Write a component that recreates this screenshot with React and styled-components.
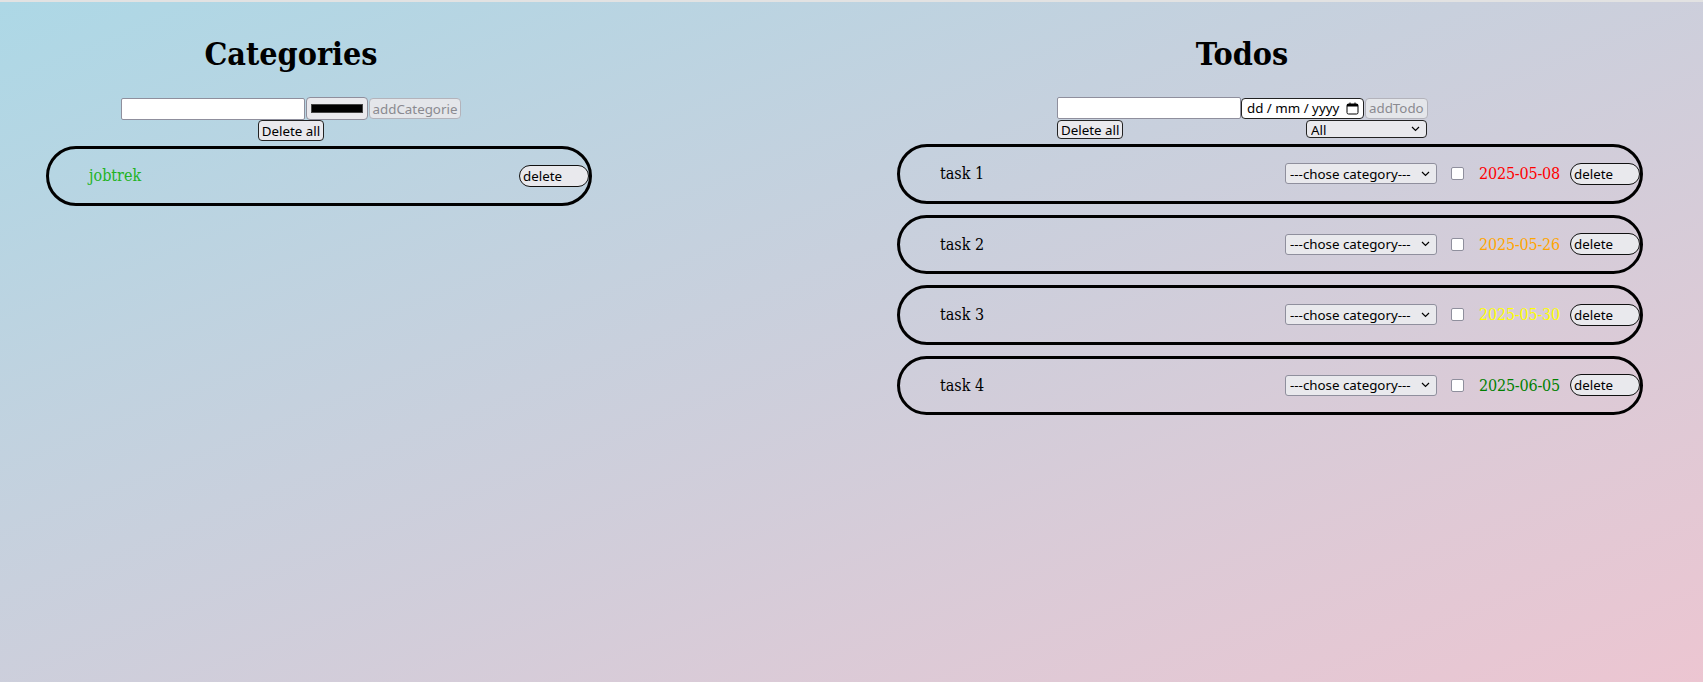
import { useState } from 'react';
import styled, { createGlobalStyle } from 'styled-components';

const GlobalStyle = createGlobalStyle`
  html, body {
    margin: 0;
    padding: 0;
  }
  body {
    font-family: "DejaVu Serif Condensed", "DejaVu Serif", serif;
    font-stretch: condensed;
  }
`;

const categories = [{ id: 1, name: 'jobtrek', color: '#22b322' }];

const todos = [
  { id: 1, title: 'task 1', date: '2025-05-08', color: '#ff0000' },
  { id: 2, title: 'task 2', date: '2025-05-26', color: '#ffa500' },
  { id: 3, title: 'task 3', date: '2025-05-30', color: '#ffff00' },
  { id: 4, title: 'task 4', date: '2025-06-05', color: '#008000' },
];

const Chevron = () => (
  <ChevronIcon width='9' height='6' viewBox='0 0 9 6'>
    <path d='M1 1l3.5 3.5L8 1' fill='none' stroke='#000' strokeWidth='1.2' />
  </ChevronIcon>
);

const CalendarIcon = () => (
  <svg width='13' height='13' viewBox='0 0 13 13'>
    <rect x='1' y='2' width='11' height='10' rx='1.5' fill='none' stroke='#000' strokeWidth='1' />
    <rect x='1' y='2' width='11' height='2.5' fill='#000' />
    <rect x='3.5' y='0.5' width='1' height='2' fill='#000' />
    <rect x='8.5' y='0.5' width='1' height='2' fill='#000' />
  </svg>
);

export default function App() {
  const [catName, setCatName] = useState('');
  const [todoName, setTodoName] = useState('');
  const [todoDate, setTodoDate] = useState('');

  return (
    <>
      <GlobalStyle />
      <Page>
        <Section $width='566px'>
          <Title>Categories</Title>
          <CategoryForm>
            <InputRow>
              <TextInput value={catName} onChange={(e) => setCatName(e.target.value)} />
              <ColorInput type='color' defaultValue='#000000' />
              <AddButton disabled>addCategorie</AddButton>
            </InputRow>
            <SmallButton $h='21px'>Delete all</SmallButton>
          </CategoryForm>
          <List>
            {categories.map((cat) => (
              <Item key={cat.id}>
                <ItemLabel $color={cat.color}>{cat.name}</ItemLabel>
                <DeleteButton>delete</DeleteButton>
              </Item>
            ))}
          </List>
        </Section>

        <Section $width='766px'>
          <Title>Todos</Title>
          <TodoForm>
            <InputRow>
              <TextInput value={todoName} onChange={(e) => setTodoName(e.target.value)} />
              <DateField>
                <DateText
                  placeholder='dd / mm / yyyy'
                  value={todoDate}
                  onChange={(e) => setTodoDate(e.target.value)}
                />
                <CalendarIcon />
              </DateField>
              <AddButton disabled>addTodo</AddButton>
            </InputRow>
            <SpreadRow>
              <SmallButton $h='19px'>Delete all</SmallButton>
              <SelectWrap>
                <FilterSelect defaultValue='all'>
                  <option value='all'>All</option>
                  <option value='done'>Done</option>
                  <option value='todo'>Todo</option>
                </FilterSelect>
                <Chevron />
              </SelectWrap>
            </SpreadRow>
          </TodoForm>
          <List>
            {todos.map((todo) => (
              <Item key={todo.id}>
                <ItemLabel>{todo.title}</ItemLabel>
                <Actions>
                  <SelectWrap>
                    <CategorySelect defaultValue=''>
                      <option value=''>---chose category---</option>
                      <option value='1'>jobtrek</option>
                    </CategorySelect>
                    <Chevron />
                  </SelectWrap>
                  <Check type='checkbox' />
                  <DueDate $color={todo.color}>{todo.date}</DueDate>
                  <DeleteButton>delete</DeleteButton>
                </Actions>
              </Item>
            ))}
          </List>
        </Section>
      </Page>
    </>
  );
}

const controlFont = `
  font-family: "Noto Sans", "DejaVu Sans", sans-serif;
  font-size: 13.33px;
  font-stretch: normal;
`;

const Page = styled.div`
  min-height: 100vh;
  box-sizing: border-box;
  border-top: 2px solid #e2e2e2;
  padding: 6px 8px 8px;
  background: linear-gradient(to bottom right, lightblue 0%, pink 130%);
  display: grid;
  grid-template-columns: 566px 766px;
  column-gap: 285px;
  align-items: start;
`;

const Section = styled.section`
  width: ${(p) => p.$width};
  display: flex;
  flex-direction: column;
  align-items: center;
`;

const Title = styled.h1`
  font-size: 32px;
  line-height: 44px;
  font-weight: 700;
  margin: 24px 0 21px;
`;

const CategoryForm = styled.div`
  display: flex;
  flex-direction: column;
  align-items: center;
`;

const TodoForm = styled.div`
  width: 370px;
  display: flex;
  flex-direction: column;
`;

const InputRow = styled.div`
  display: flex;
  align-items: center;
`;

const SpreadRow = styled.div`
  display: flex;
  align-items: center;
  justify-content: space-between;
  height: 20px;
`;

const TextInput = styled.input`
  ${controlFont}
  box-sizing: border-box;
  width: 184px;
  height: 22px;
  margin: 0;
  padding: 0 4px;
  background: #fff;
  border: 1px solid #8f8f9d;
  border-radius: 2px;
`;

const ColorInput = styled.input`
  -webkit-appearance: none;
  appearance: none;
  box-sizing: border-box;
  width: 62px;
  height: 23px;
  margin: 0 1px;
  padding: 0;
  background: #e9e9ed;
  border: 1px solid #8f8f9d;
  border-radius: 4px;

  &::-webkit-color-swatch-wrapper {
    padding: 6px 4px;
  }
  &::-webkit-color-swatch {
    border: 1px solid #444;
    border-radius: 0;
  }
`;

const DateField = styled.label`
  box-sizing: border-box;
  width: 123px;
  height: 21px;
  margin-right: 1px;
  padding: 0 4px 0 5px;
  display: flex;
  align-items: center;
  gap: 3px;
  background: #fff;
  border: 1px solid #222;
  border-radius: 4px;
`;

const DateText = styled.input`
  ${controlFont}
  flex: 1;
  min-width: 0;
  border: none;
  outline: none;
  padding: 0;
  background: transparent;
  color: #000;

  &::placeholder {
    color: #000;
  }
`;

const buttonBase = `
  ${controlFont}
  box-sizing: border-box;
  margin: 0;
  background: #e9e9ed;
  color: #000;
  border-radius: 4px;
  cursor: pointer;
`;

const AddButton = styled.button`
  ${buttonBase}
  height: 21px;
  padding: 0 3px;
  border: 1px solid #b3b3bb;
  &:disabled {
    color: #8a8a90;
    background: #e4e6ea;
    cursor: default;
  }
`;

const SmallButton = styled.button`
  ${buttonBase}
  height: ${(p) => p.$h};
  padding: 0 3px;
  border: 1px solid #222;
`;

const SelectWrap = styled.div`
  position: relative;
  display: flex;
`;

const ChevronIcon = styled.svg`
  position: absolute;
  right: 7px;
  top: 50%;
  transform: translateY(-50%);
  pointer-events: none;
`;

const selectBase = `
  ${controlFont}
  -webkit-appearance: none;
  appearance: none;
  box-sizing: border-box;
  margin: 0;
  padding: 0 4px;
  background: #e9e9ed;
  color: #000;
`;

const FilterSelect = styled.select`
  ${selectBase}
  width: 121px;
  height: 18px;
  border: 1px solid #222;
  border-radius: 4px;
`;

const CategorySelect = styled.select`
  ${selectBase}
  width: 152px;
  height: 21px;
  border: 1px solid #8f8f9d;
  border-radius: 3px;
`;

const List = styled.ul`
  align-self: stretch;
  list-style: none;
  margin: 5px 0 0;
  padding: 0 0 0 38px;
  display: flex;
  flex-direction: column;
  gap: 11px;
`;

const Item = styled.li`
  box-sizing: border-box;
  width: calc(100% + 18px);
  height: 59.5px;
  border: 3px solid #000;
  border-radius: 32px;
  padding: 0 0 0 40px;
  display: flex;
  align-items: center;
  justify-content: space-between;
  font-size: 16px;
`;

const ItemLabel = styled.span`
  color: ${(p) => p.$color || '#000'};
`;

const Actions = styled.div`
  display: flex;
  align-items: center;
`;

const Check = styled.input`
  -webkit-appearance: none;
  appearance: none;
  box-sizing: border-box;
  width: 13px;
  height: 13px;
  margin: 0 15px 0 14px;
  background: #fff;
  border: 1px solid #8f8f9d;
  border-radius: 2px;

  &:checked {
    background: #0060df;
    border-color: #0060df;
  }
`;

const DueDate = styled.span`
  color: ${(p) => p.$color};
  margin-right: 10px;
  letter-spacing: -0.2px;
`;

const DeleteButton = styled.button`
  ${buttonBase}
  width: 70px;
  height: 22px;
  padding: 0 3px;
  text-align: left;
  border: 1px solid #111;
  border-radius: 11px;
`;
